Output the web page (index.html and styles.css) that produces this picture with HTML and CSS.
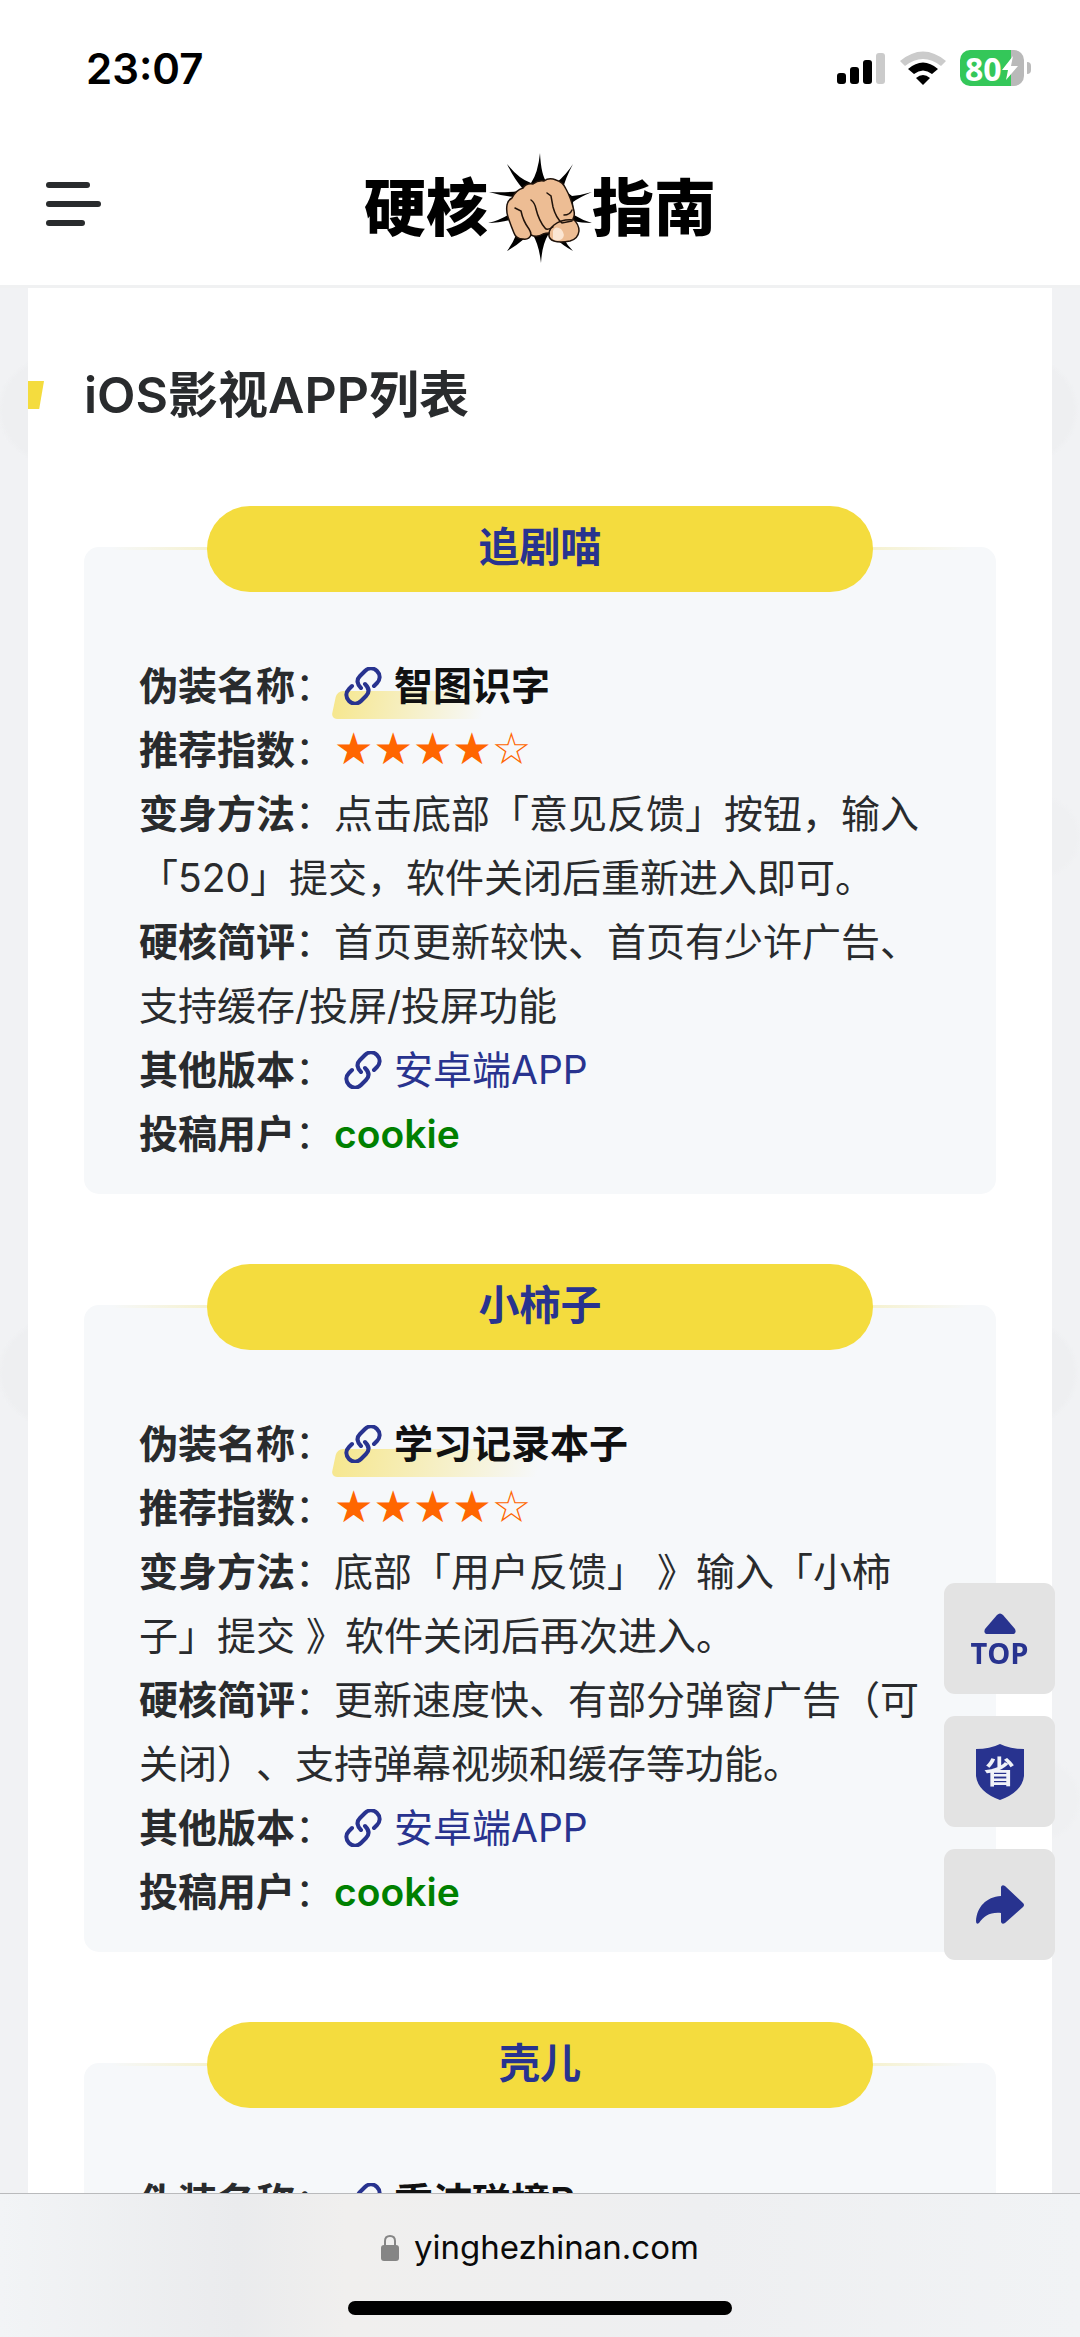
FILE: index.html
```html
<!DOCTYPE html>
<html lang="zh-CN">
<head>
  <meta charset="utf-8">
  <meta name="viewport" content="width=device-width,initial-scale=1.0">
  <title>硬核指南</title>
  <link rel="stylesheet" href="styles.css">
</head>
<body>
  <!-- shared icons -->
  <svg class="sprite" aria-hidden="true">
    <symbol id="link" viewBox="0 0 38 38">
      <g fill="none" stroke="#28338f" stroke-width="4" stroke-linecap="round">
        <path d="M30 19l3-3c3-3 4-8 0-12s-9-3-12 0l-5 5c-4 4-3 8 1 12"/>
        <path d="M8 19l-3 3c-3 3-4 8 0 12s9 3 12 0l5-5c4-4 3-8-1-12"/>
      </g>
    </symbol>
  </svg>

  <div class="statusbar">
    <span class="time">23:07</span>
    <div class="status-icons">
      <svg width="49" height="33" viewBox="0 0 49 33">
        <rect x="0" y="21" width="9" height="11" rx="3"/>
        <rect x="13" y="15" width="9" height="17" rx="3"/>
        <rect x="26" y="8" width="9" height="24" rx="3"/>
        <rect x="39" y="1" width="9" height="31" rx="3" fill="#cbcbcb"/>
      </svg>
      <svg width="46" height="34" viewBox="0 0 46 34">
        <path d="M0 10Q23 -9 46 10L41 15Q23 1 5 15Z" fill="#cbcbcb"/>
        <path d="M8 18Q23 5 38 18L32 23Q23 16 14 23Z"/>
        <path d="M16 27Q23 21 30 27L23 34Z"/>
      </svg>
      <div class="battery">
        <span>80</span>
        <svg width="16" height="24" viewBox="0 0 16 24"><path d="M11 0L0 14h6L4 24 16 10H9Z" fill="#fff"/></svg>
      </div>
    </div>
  </div>

  <header class="header">
    <button class="menu" aria-label="菜单"><i></i><i></i><i></i></button>
    <a class="logo" href="#">
      <span>硬核</span>
      <svg width="104" height="112" viewBox="0 0 104 112">
        <path d="M52 0Q53 22 59 30L68 30Q78 22 85 11Q77 26 75 36L84 43Q94 42 104 39Q92 44 85 49L86 62Q94 67 104 70Q94 70 84 68L76 86Q79 92 85 98Q74 92 66 84L60 82Q54 92 53 110Q51 92 45 82L36 86Q28 93 19 98Q25 90 28 82L22 67Q10 70 0 70Q12 67 20 62L28 44Q14 43 1 39Q17 40 31 38L35 36Q26 26 19 11Q31 26 43 30Q50 20 52 0Z"/>
        <path d="M19 52Q20 47 24 45Q28 37 35 35Q38 30 45 31Q50 27 56 28Q61 24 68 27Q75 29 78 36Q83 45 86 58Q87 63 85 66Q91 71 91 78Q90 86 82 88Q72 90 66 88Q60 86 61 80Q58 80 55 81Q49 85 43 82Q41 87 35 86Q28 86 26 80Q23 73 20 64Q18 58 19 52Z" fill="#edbd94" stroke="#20130b" stroke-width="1.5"/>
        <g fill="none" stroke="#20130b" stroke-width="1.5" stroke-linecap="round">
          <path d="M27 55L33 58Q35 68 41 76Q43 79 43 82"/>
          <path d="M43 47Q47 50 48 56Q51 68 57 75Q59 78 65 74"/>
          <path d="M59 40L63 43L65 54Q68 65 74 70L84 68"/>
          <path d="M76 62Q82 62 84 57"/>
          <path d="M85 67Q74 66 66 72Q61 76 61 81"/>
        </g>
        <path d="M65 78Q67 72 73 76Q78 82 74 86Q69 89 65 86Z" fill="#fbe6d3"/>
      </svg>
      <span>指南</span>
    </a>
  </header>

  <main class="content">
    <h2>iOS影视APP列表</h2>

    <section class="item">
      <h3>追剧喵</h3>
      <div class="card">
        <p><b>伪装名称</b>：<a class="name" href="#"><svg><use href="#link"/></svg>智图识字</a></p>
        <p><b>推荐指数</b>：<span class="stars">★★★★☆</span></p>
        <p><b>变身方法</b>：点击底部「意见反馈」按钮，输入「520」提交，软件关闭后重新进入即可。</p>
        <p><b>硬核简评</b>：首页更新较快、首页有少许广告、支持缓存/投屏/投屏功能</p>
        <p><b>其他版本</b>：<a href="#"><svg><use href="#link"/></svg>安卓端APP</a></p>
        <p><b>投稿用户</b>：<b class="user">cookie</b></p>
      </div>
    </section>

    <section class="item">
      <h3>小柿子</h3>
      <div class="card">
        <p><b>伪装名称</b>：<a class="name" href="#"><svg><use href="#link"/></svg>学习记录本子</a></p>
        <p><b>推荐指数</b>：<span class="stars">★★★★☆</span></p>
        <p><b>变身方法</b>：底部「用户反馈」 》输入「小柿子」提交 》软件关闭后再次进入。</p>
        <p><b>硬核简评</b>：更新速度快、有部分弹窗广告（可关闭）、支持弹幕视频和缓存等功能。</p>
        <p><b>其他版本</b>：<a href="#"><svg><use href="#link"/></svg>安卓端APP</a></p>
        <p><b>投稿用户</b>：<b class="user">cookie</b></p>
      </div>
    </section>

    <section class="item">
      <h3>壳儿</h3>
      <div class="card">
        <p><b>伪装名称</b>：<a class="name" href="#"><svg><use href="#link"/></svg>重沛碰撞B</a></p>
      </div>
    </section>
  </main>

  <div class="tools">
    <button class="top">
      <svg width="32" height="22" viewBox="0 0 32 22"><path d="M13 2q3-3 6 0l12 14q2 5-3 5H4q-5 0-3-5Z"/></svg>
      <span>TOP</span>
    </button>
    <button class="save" aria-label="省">
      <svg width="48" height="56" viewBox="0 0 48 56"><path d="M0 5Q14 5 24 0Q34 5 48 5V32Q46 48 24 56Q2 48 0 32Z"/></svg>
      <span>省</span>
    </button>
    <button aria-label="分享">
      <svg width="48" height="40" viewBox="0 0 48 40"><path d="M25 2q1-3 4-1l18 17q2 2 0 4L29 38q-3 2-4-1V28C14 27 8 31 3 38q-3 2-3-2C1 22 10 12 25 11Z"/></svg>
    </button>
  </div>

  <footer class="browserbar">
    <div class="url">
      <svg width="18" height="27" viewBox="0 0 18 27"><path d="M4 13V7q0-5 5-5t5 5v6" fill="none" stroke="#858585" stroke-width="2"/><rect y="11" width="18" height="16" rx="3" fill="#858585"/></svg>
      <span>yinghezhinan.com</span>
    </div>
    <div class="home"></div>
  </footer>
</body>
</html>
```

FILE: styles.css
```css
* {
  box-sizing: border-box;
}
body {
  margin: 0;
  height: 100vh;
  overflow: hidden;
  display: flex;
  flex-direction: column;
  /* faint pattern that shows at both sides of the article */
  background:
    radial-gradient(circle at 51px 410px, #eeeff1 48px, transparent 54px) left top / 102px 963px repeat-y,
    radial-gradient(circle at 51px 410px, #eeeff1 48px, transparent 54px) right top / 106px 963px repeat-y,
    radial-gradient(circle at 66px 837px, #eff0f2 36px, transparent 42px) right top / 106px 963px repeat-y,
    #f1f2f4;
  color: #292b2d;
  font-family: Inter, "Noto Sans CJK SC", sans-serif;
  text-spacing-trim: space-all;
}
h2, h3, p {
  margin: 0;
}
a {
  color: #28338f;
  text-decoration: none;
}
button {
  border: 0;
  padding: 0;
  font-family: inherit;
}
.sprite {
  position: absolute;
  width: 0;
  height: 0;
}

/* phone status bar */
.statusbar {
  flex: none;
  height: 136px;
  padding: 0 50px 0 86px;
  display: flex;
  justify-content: space-between;
  align-items: center;
  background: #fff;
  color: #000;
}
.time {
  font-size: 42px;
  font-weight: 600;
}
.status-icons {
  display: flex;
  align-items: center;
  gap: 14px;
}
.battery {
  position: relative;
  width: 64px;
  height: 36px;
  margin-right: 6px;
  padding-left: 5px;
  display: flex;
  align-items: center;
  border-radius: 10px;
  background: linear-gradient(to right, #34c759 80%, #b9b9b9 80%);
  color: #fff;
  font-family: "Open Sans", sans-serif;
  font-size: 32px;
  font-weight: 700;
}
.battery::after {
  content: "";
  position: absolute;
  right: -7px;
  top: 12px;
  width: 4px;
  height: 12px;
  border-radius: 0 4px 4px 0;
  background: #bbb;
}

/* site header */
.header {
  flex: none;
  height: 152px;
  padding: 0 46px 4px;
  display: grid;
  grid-template-columns: 1fr auto 1fr;
  align-items: center;
  background: #fff;
  border-bottom: 3px solid #f0f1f2;
}
.menu {
  width: 55px;
  margin-bottom: 10px;
  display: grid;
  gap: 13px;
  background: none;
}
.menu i {
  width: 44px;
  height: 6px;
  border-radius: 3px;
  background: #292b2d;
}
.menu i:nth-child(2) {
  width: 55px;
}
.menu i:nth-child(3) {
  width: 39px;
}
.logo {
  display: flex;
  align-items: center;
  color: #000;
  font-size: 62px;
  line-height: 90px;
  font-weight: 900;
}

/* article */
.content {
  flex: 1;
  min-height: 0;
  overflow: hidden;
  margin: 0 28px;
  padding: 67px 56px 0;
  background: #fff;
}
h2 {
  position: relative;
  margin-bottom: 1px;
  font-size: 50px;
  line-height: 80px;
  font-weight: 600;
}
h2::before {
  content: "";
  position: absolute;
  left: -56px;
  top: 26px;
  width: 16px;
  height: 28px;
  background: #f4dc3e;
  clip-path: polygon(0 0, 100% 0, 70% 100%, 0 100%);
}
.item {
  padding-top: 70px;
}
h3 {
  position: relative;
  z-index: 1;
  width: 73%;
  height: 86px;
  margin: 0 auto -45px;
  border-radius: 43px;
  background: #f4dc3e;
  color: #28338f;
  text-align: center;
  font-size: 41px;
  line-height: 82px;
  font-weight: 600;
}
.card {
  position: relative;
  padding: 107px 72px 28px 55px;
  border-radius: 15px;
  background: #f6f8fa;
  font-size: 39px;
  line-height: 64px;
}
.card::before {
  content: "";
  position: absolute;
  left: 0;
  right: 0;
  top: 0;
  height: 3px;
  background: linear-gradient(to right, transparent 3%, #f4dc3e 50%, transparent 97%);
}
.card a svg {
  width: 38px;
  height: 38px;
  margin: 0 12px 0 10px;
  vertical-align: -5px;
}
.card b {
  font-weight: 600;
}
.name {
  position: relative;
  z-index: 0;
  color: #111;
  font-weight: 600;
}
.name::before {
  content: "";
  position: absolute;
  z-index: -1;
  left: 0;
  right: 0;
  bottom: -10px;
  height: 28px;
  border-radius: 6px;
  background: linear-gradient(to right, #f6e78f, transparent 70%);
  transform: skewX(-12deg);
}
.stars {
  color: #ff6600;
  font-family: "DejaVu Sans", sans-serif;
  font-size: 44px;
  line-height: 40px;
}
.card .user {
  color: #008000;
}

/* floating buttons */
.tools {
  position: fixed;
  right: 25px;
  bottom: 377px;
  display: grid;
  gap: 22px;
}
.tools button {
  width: 111px;
  height: 111px;
  display: grid;
  place-items: center;
  place-content: center;
  border-radius: 11px;
  background: #e3e3e3;
  color: #28338f;
  fill: #28338f;
}
.tools .top {
  padding-top: 6px;
}
.top span {
  font-family: "Open Sans", sans-serif;
  font-size: 29px;
  line-height: 36px;
  font-weight: 700;
}
.save svg, .save span {
  grid-area: 1 / 1;
}
.save span {
  color: #f0f2f8;
  font-size: 31px;
  line-height: 40px;
  font-weight: 700;
}

/* browser address bar */
.browserbar {
  flex: none;
  position: relative;
  height: 144px;
  padding: 31px 0 22px;
  display: flex;
  flex-direction: column;
  justify-content: space-between;
  align-items: center;
  border-top: 1px solid #b9babc;
  background: linear-gradient(to right, #f2f4f6, #eaebed 22%, #f0efee 32%, #eeeff1 65%, #f1f3f5);
  color: #0a0a0a;
}
.url {
  display: flex;
  align-items: center;
  gap: 15px;
  font-size: 33px;
  line-height: 44px;
}
.home {
  width: 384px;
  height: 14px;
  border-radius: 7px;
  background: #000;
}
```
